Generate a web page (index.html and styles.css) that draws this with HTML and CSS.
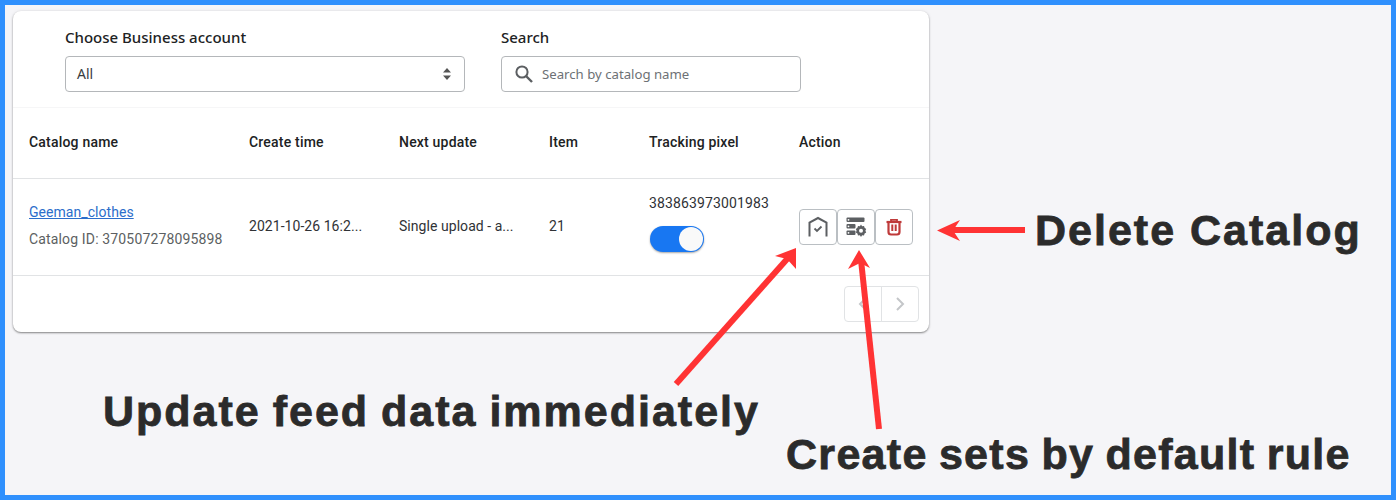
FILE: index.html
```html
<!DOCTYPE html>
<html lang="en">
<head>
<meta charset="utf-8">
<title>Catalogs</title>
<link rel="stylesheet" href="styles.css">
</head>
<body>
<div class="frame">
  <section class="card">
    <div class="filters">
      <div class="field field-select">
        <div class="field-label">Choose Business account</div>
        <div class="control">
          <span class="control-text">All</span>
          <svg class="stepper" width="10" height="14" viewBox="0 0 10 14"><path d="M5 1 L9 5.5 H1 Z M5 13 L1 8.5 H9 Z" fill="#555"/></svg>
        </div>
      </div>
      <div class="field field-search">
        <div class="field-label">Search</div>
        <div class="control control-search">
          <svg width="20" height="20" viewBox="0 0 20 20" fill="none" stroke="#5c5f62" stroke-width="2"><circle cx="8" cy="8" r="5.6"/><path d="M12 12 L18 18" stroke-width="2.4"/></svg>
          <span class="placeholder">Search by catalog name</span>
        </div>
      </div>
    </div>
    <div class="table">
      <div class="row row-head">
        <div class="cell c1">Catalog name</div>
        <div class="cell c2">Create time</div>
        <div class="cell c3">Next update</div>
        <div class="cell c4">Item</div>
        <div class="cell c5">Tracking pixel</div>
        <div class="cell c6">Action</div>
      </div>
      <div class="row row-body">
        <div class="cell c1">
          <a class="link" href="#">Geeman_clothes</a>
          <div class="sub">Catalog ID: 370507278095898</div>
        </div>
        <div class="cell c2">2021-10-26 16:2...</div>
        <div class="cell c3">Single upload - a...</div>
        <div class="cell c4">21</div>
        <div class="cell c5 pixel-cell">
          <div class="pixel">383863973001983</div>
          <div class="toggle"><span class="knob"></span></div>
        </div>
        <div class="cell c6 actions">
          <button class="btn" type="button" aria-label="Update feed data">
            <svg width="22" height="22" viewBox="0 0 22 22" fill="none" stroke="#5c5f62" stroke-width="2"><path d="M2.500 20.500 V6.500 L11 2 L19.500 6.500 V20.500"/><path d="M7.500 12.500 L10 15 L14.500 10.500" stroke-width="1.800"/></svg>
          </button>
          <button class="btn" type="button" aria-label="Create sets">
            <svg width="22" height="22" viewBox="0 0 22 22"><g fill="#5c5f62"><rect x="1.500" y="1.500" width="18" height="4.600" rx="1"/><rect x="1.500" y="8" width="9" height="4.600" rx="1"/><rect x="1.500" y="14.500" width="9" height="4.600" rx="1"/><path d="M16 8.500 l1.100 1.700 1.900 -.3 .6 1.900 1.600 1.100 -.8 1.800 .8 1.800 -1.600 1.100 -.6 1.900 -1.900 -.3 -1.100 1.700 -1.100 -1.700 -1.900 .3 -.6 -1.900 -1.600 -1.100 .8 -1.800 -.8 -1.800 1.600 -1.100 .6 -1.900 1.900 .3 z"/></g><circle cx="16" cy="14.700" r="2" fill="#fff"/><g fill="#fff"><circle cx="3.500" cy="3.800" r=".9"/><circle cx="3.500" cy="10.300" r=".9"/><circle cx="3.500" cy="16.800" r=".9"/></g></svg>
          </button>
          <button class="btn" type="button" aria-label="Delete">
            <svg width="20" height="20" viewBox="0 0 20 20" fill="none" stroke="#bf3a3a" stroke-width="2.200"><path d="M2.500 5 H17.500"/><path d="M7 4.500 V2.800 H13 V4.500" stroke-width="1.800"/><path d="M4.500 5.500 V15 Q4.500 17.500 7 17.500 H13 Q15.500 17.500 15.500 15 V5.500"/><path d="M8.300 7.500 V14 M11.700 7.500 V14" stroke-width="2"/></svg>
          </button>
        </div>
      </div>
      <div class="pager-row">
        <div class="pager">
          <span class="page-btn"><svg width="10" height="16" viewBox="0 0 10 16" fill="none" stroke="#c4c6c9" stroke-width="2"><path d="M8 2 L2 8 L8 14"/></svg></span>
          <span class="page-btn page-next"><svg width="10" height="16" viewBox="0 0 10 16" fill="none" stroke="#c4c6c9" stroke-width="2"><path d="M2 2 L8 8 L2 14"/></svg></span>
        </div>
      </div>
    </div>
  </section>

  <svg class="arrows" width="1396" height="500" viewBox="0 0 1396 500" aria-hidden="true">
    <g fill="none" stroke="#ff3334" stroke-width="6">
      <path d="M1025 230 H948"/>
      <path d="M676 384 L788 258"/>
      <path d="M879 429 L861 260"/>
    </g>
    <g fill="#ff3334">
      <path d="M937 230.500 L960 220 L953 230.500 L960 241 Z"/>
      <path d="M796 248 L796 269 L787 259 L775 256 Z"/>
      <path d="M859 250 L870 268 L860 263 L848 269 Z"/>
    </g>
  </svg>
  <div class="note note-delete">Delete Catalog</div>
  <div class="note note-update">Update feed data immediately</div>
  <div class="note note-sets">Create sets by default rule</div>
</div>
</body>
</html>
```
FILE: styles.css
```css
* { box-sizing: border-box; }
html, body { margin: 0; padding: 0; }
body { font-family: Roboto, "Liberation Sans", sans-serif; color: #202223; }
.frame {
  position: relative;
  width: 1396px;
  height: 500px;
  overflow: hidden;
  border: 5px solid #2f90fd;
  background: #f5f5f8;
  padding: 6px 0 0 8px;
}
.card {
  width: 916px;
  height: 321px;
  background: #fff;
  border-radius: 8px;
  box-shadow: 0 1px 2px rgba(0,0,0,.45), 0 0 4px rgba(0,0,0,.06);
}
.filters {
  display: flex;
  gap: 36px;
  height: 97px;
  padding: 16px 0 0 52px;
  border-bottom: 1px solid #f6f6f7;
}
.field-select { width: 400px; }
.field-search { width: 300px; }
.field-label {
  font-family: "Noto Sans", sans-serif;
  font-size: 15px;
  line-height: 20px;
  font-weight: 500;
  color: #202223;
  margin-bottom: 9px;
}
.control {
  height: 36px;
  border: 1px solid #b4b7ba;
  border-radius: 4px;
  display: flex;
  align-items: center;
  justify-content: space-between;
  padding: 0 12px 1px 11px;
  font-family: "Noto Sans", sans-serif;
  font-size: 14px;
  color: #3a3c3f;
}
.control-search { justify-content: flex-start; gap: 8px; padding-left: 12px; padding-bottom: 0; }
.placeholder { font-size: 13.2px; color: #6d7175; }
.row { display: flex; }
.row-head { height: 71px; padding-bottom: 2px; border-bottom: 1px solid #e1e3e5; align-items: center; font-size: 14px; font-weight: 500; letter-spacing: .2px; color: #202223; }
.row-body { height: 97px; padding-bottom: 2px; border-bottom: 1px solid #e1e3e5; align-items: center; font-size: 14px; letter-spacing: .05px; color: #303236; }
.cell { padding-left: 16px; }
.c1 { width: 220px; }
.c2, .c3, .c5 { width: 150px; }
.c4 { width: 100px; }
.c6 { flex: 1; }
.link { color: #2c6ecb; text-decoration: underline; line-height: 20px; display: block; margin-top: -1px; }
.sub { color: #5c5f62; line-height: 20px; margin-top: 7px; letter-spacing: .15px; }
.pixel-cell { padding-bottom: 7px; }
.pixel { line-height: 20px; letter-spacing: .13px; }
.toggle {
  width: 54px;
  height: 26px;
  margin: 13px 0 0 1px;
  border-radius: 13px;
  background: #1877f2;
  box-shadow: 0 1px 2px rgba(0,0,0,.35);
  display: flex;
  justify-content: flex-end;
  align-items: center;
  padding-right: 1px;
}
.knob { width: 24px; height: 24px; border-radius: 50%; background: #f9f9f9; }
.actions { display: flex; margin-top: 2px; }
.btn {
  width: 38px;
  height: 36px;
  margin: 0;
  padding: 0;
  background: #fff;
  border: 1px solid #babfc3;
  border-radius: 4px;
  display: flex;
  align-items: center;
  justify-content: center;
}
.pager-row { display: flex; justify-content: flex-end; padding: 10px 10px 0 0; }
.pager { display: flex; }
.page-btn {
  width: 38px;
  height: 36px;
  border: 1px solid #e1e3e5;
  border-radius: 4px 0 0 4px;
  display: flex;
  align-items: center;
  justify-content: center;
}
.page-next { margin-left: -1px; border-radius: 0 4px 4px 0; }
.arrows { position: absolute; left: -5px; top: -5px; pointer-events: none; }
.note {
  position: absolute;
  font-family: "Liberation Sans", sans-serif;
  font-weight: 700;
  font-size: 43px;
  line-height: 50px;
  color: #2b2b2b;
  white-space: nowrap;
  letter-spacing: 2px;
  -webkit-text-stroke: .8px #2b2b2b;
}
.note-delete { left: 1030px; top: 200px; }
.note-update { left: 98px; top: 381px; word-spacing: -2px; }
.note-sets { left: 781px; top: 424px; letter-spacing: 1.3px; word-spacing: -2px; }
```
